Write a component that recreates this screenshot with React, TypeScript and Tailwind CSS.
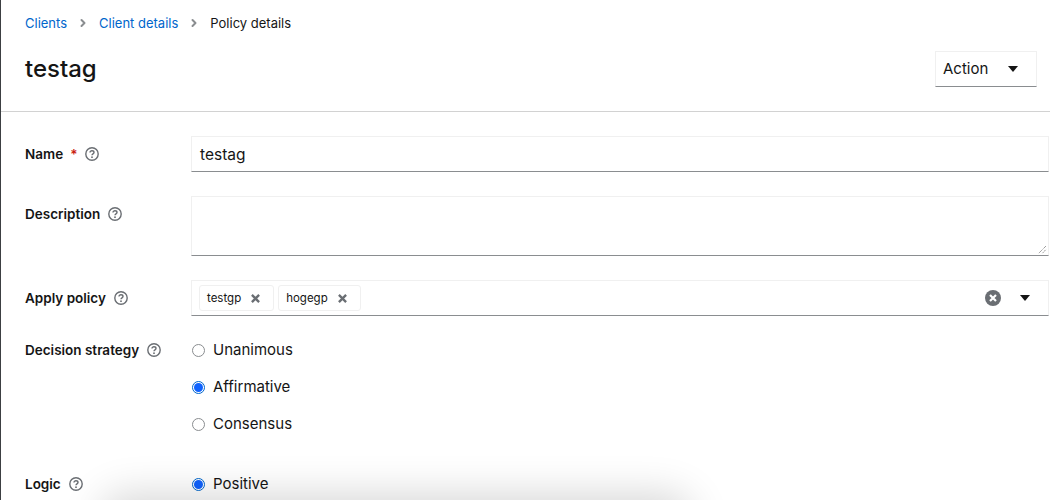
import React from 'react';
import { ChevronRight } from 'lucide-react';

function HelpIcon() {
  return (
    <svg viewBox="0 0 14 14" className="w-[14px] h-[14px] text-[#6a6e73]" fill="none">
      <circle cx="7" cy="7" r="6.2" stroke="currentColor" strokeWidth="1.4" />
      <path d="M5 5.6c0-1.1.9-1.8 2-1.8s2 .7 2 1.7c0 1.4-2 1.3-2 2.7" stroke="currentColor" strokeWidth="1.4" />
      <circle cx="7" cy="10.2" r=".9" fill="currentColor" />
    </svg>
  );
}

function CaretDown() {
  return (
    <svg viewBox="0 0 10 6" className="w-[10px] h-[6px] text-[#151515]" fill="currentColor">
      <path d="M0 0h10L5 6z" />
    </svg>
  );
}

function Label({ text, required }: { text: string; required?: boolean }) {
  return (
    <div className="w-[166px] shrink-0 flex items-center h-[20px] text-[13.5px] font-semibold text-[#151515]">
      <span>{text}</span>
      {required && <span className="ml-[7px] text-[#c9190b]">*</span>}
      <span className="ml-[8px]">
        <HelpIcon />
      </span>
    </div>
  );
}

function Chip({ text }: { text: string }) {
  return (
    <div className="flex items-center h-[26px] border border-[#f0f0f0] rounded-[3px] pl-[7px] pr-[13px] text-[11.5px] text-[#151515]">
      <span className="pt-[1px]">{text}</span>
      <svg viewBox="0 0 10 10" className="ml-[10px] w-[9px] h-[9px] text-[#6a6e73]" stroke="currentColor" strokeWidth="2.6">
        <path d="M1 1l8 8M9 1l-8 8" />
      </svg>
    </div>
  );
}

function Radio({ text, checked }: { text: string; checked?: boolean }) {
  return (
    <div className="flex items-center h-[21px] pl-[1px] text-[15px] text-[#151515]">
      {checked ? (
        <span className="w-[13px] h-[13px] rounded-full border border-[#0066cc] flex items-center justify-center">
          <span className="w-[9px] h-[9px] rounded-full bg-[#0f62fe]" />
        </span>
      ) : (
        <span className="w-[13px] h-[13px] rounded-full border border-[#8a8d90] bg-white" />
      )}
      <span className="ml-[8px]">{text}</span>
    </div>
  );
}

export default function App() {
  return (
    <div className="relative w-[1050px] h-[500px] overflow-hidden bg-white border-l border-[#3c3f42] font-['Inter','Noto_Sans',sans-serif]">
      <div className="h-[112px] border-b border-[#d2d2d2] pl-[24px] pr-[13px]">
        <nav className="flex items-center pt-[13px] h-[32px] text-[13px] leading-[18px]">
          <a className="text-[#0066cc]">Clients</a>
          <ChevronRight className="mx-[10px] w-[12px] h-[12px] text-[#8a8d90]" strokeWidth={4} />
          <a className="text-[#0066cc]">Client details</a>
          <ChevronRight className="mx-[10px] w-[12px] h-[12px] text-[#8a8d90]" strokeWidth={4} />
          <span className="text-[#151515]">Policy details</span>
        </nav>
        <div className="flex items-center justify-between mt-[19px]">
          <h1 className="text-2xl font-medium text-[#151515]">testag</h1>
          <div className="w-[102px] h-[36px] flex items-center justify-between pl-[7px] pr-[18px] border border-[#f0f0f0] border-b-[#8a8d90] text-[15px] text-[#151515]">
            <span>Action</span>
            <CaretDown />
          </div>
        </div>
      </div>

      <div className="pl-[24px] pt-[24px]">
        <div className="flex">
          <div className="pt-[8px]"><Label text="Name" required /></div>
          <div className="w-[858px] h-[36px] flex items-center px-[8px] pt-[1px] border border-[#f0f0f0] border-b-[#8a8d90] text-[15.5px] text-[#151515]">testag</div>
        </div>

        <div className="flex mt-[24px]">
          <div className="pt-[8px]"><Label text="Description" /></div>
          <div className="relative w-[858px] h-[60px] border border-[#f0f0f0] border-b-[#8a8d90]">
            <svg viewBox="0 0 10 10" className="absolute right-[1px] bottom-[1px] w-[9px] h-[9px] text-[#555]" stroke="currentColor" strokeWidth="1" strokeDasharray="1 1">
              <path d="M1 9l8-8M5 9l4-4" />
            </svg>
          </div>
        </div>

        <div className="flex mt-[24px]">
          <div className="pt-[8px]"><Label text="Apply policy" /></div>
          <div className="w-[858px] h-[36px] flex items-center pl-[7px] pr-[18px] border border-[#f0f0f0] border-b-[#8a8d90]">
            <div className="flex gap-[4px]">
              <Chip text="testgp" />
              <Chip text="hogegp" />
            </div>
            <svg viewBox="0 0 16 16" className="ml-auto w-[16px] h-[16px] text-[#6a6e73]">
              <circle cx="8" cy="8" r="8" fill="currentColor" />
              <path d="M5 5l6 6M11 5l-6 6" stroke="#fff" strokeWidth="2.2" />
            </svg>
            <span className="ml-[19px]"><CaretDown /></span>
          </div>
        </div>

        <div className="flex mt-[24px]">
          <Label text="Decision strategy" />
          <div className="flex flex-col gap-[16px]">
            <Radio text="Unanimous" />
            <Radio text="Affirmative" checked />
            <Radio text="Consensus" />
          </div>
        </div>

        <div className="flex mt-[39px]">
          <Label text="Logic" />
          <Radio text="Positive" checked />
        </div>
      </div>

      {/* shadow of the floating bar just under the fold */}
      <div className="absolute left-[120px] w-[550px] top-[514px] h-[20px] rounded-lg shadow-[0_0_40px_20px_rgba(3,3,3,0.16)]" />
    </div>
  );
}
